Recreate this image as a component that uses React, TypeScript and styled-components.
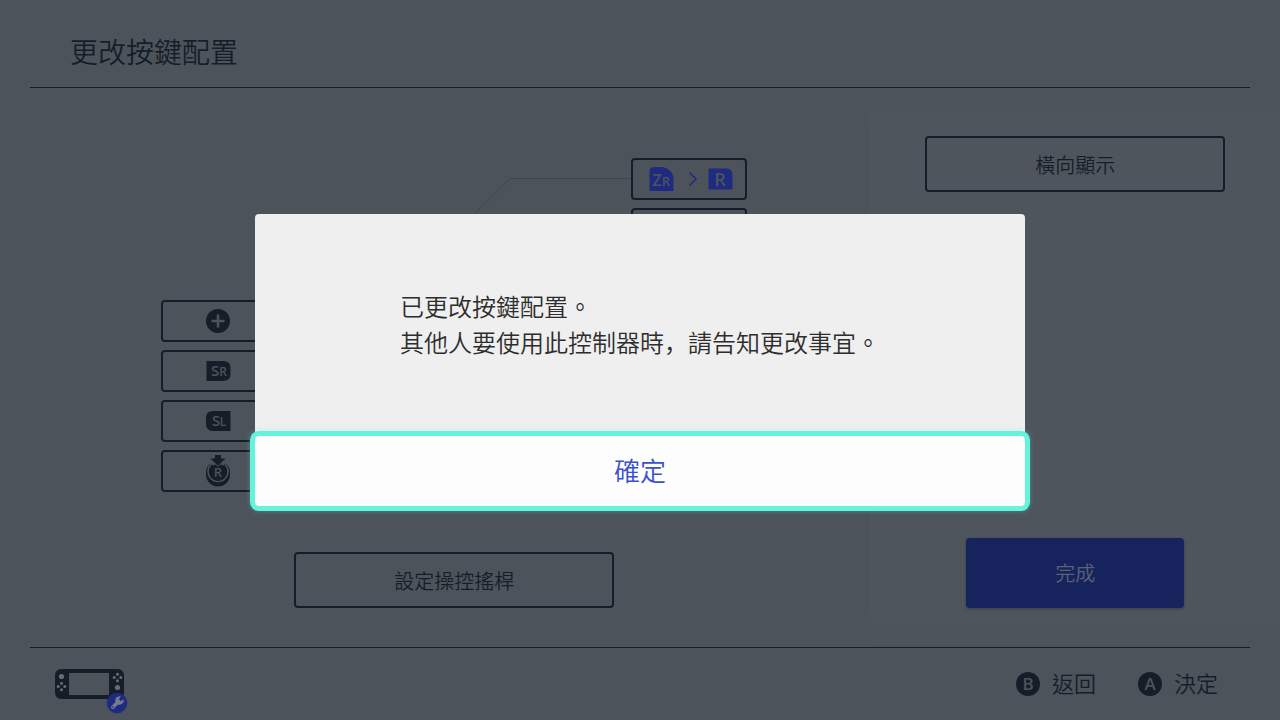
import React from "react";
import styled, { createGlobalStyle } from "styled-components";

const color = {
  page: "#4c535b",
  side: "#4e555d",
  ink: "#151e28",
  blue: "#1f2b80",
  blueDeep: "#17235c",
  faint: "#3f464e",
  paper: "#efefef",
  accent: "#3a50cc",
  focus: "#62f4dc",
};

const Global = createGlobalStyle`
  * { box-sizing: border-box; }
  body {
    margin: 0;
    background: ${color.page};
    color: ${color.ink};
    font-family: "Noto Sans CJK TC", "Noto Sans", sans-serif;
    font-weight: 350;
  }
  button { font: inherit; cursor: pointer; }
`;

const Page = styled.div`
  display: flex;
  flex-direction: column;
  min-height: 100vh;
`;

const Header = styled.header`
  display: flex;
  align-items: center;
  height: 88px;
  margin: 0 30px;
  padding: 14px 40px 0;
  border-bottom: 1px solid ${color.ink};
`;

const Title = styled.h1`
  margin: 0;
  font-size: 28px;
  line-height: 40px;
  font-weight: 350;
`;

const Main = styled.main`
  display: flex;
  flex: 1;
`;

const Workspace = styled.section`
  display: flex;
  flex: 1;
  flex-direction: column;
  align-items: center;
  justify-content: space-between;
  padding: 70px 0 39px 38px;
`;

const Mapping = styled.div`
  display: flex;
  align-items: flex-start;
  justify-content: space-between;
  width: 100%;
  max-width: 586px;
`;

const KeyColumn = styled.div<{ $drop?: boolean }>`
  display: flex;
  flex-direction: column;
  gap: 8px;
  width: 116px;
  padding-top: ${(p) => (p.$drop ? "142px" : "0")};
`;

const Leader = styled.svg`
  margin-left: auto;
  margin-top: 20px;
`;

const KeyButton = styled.button<{ $pair?: boolean }>`
  display: flex;
  align-items: center;
  justify-content: center;
  gap: 9px;
  height: 42px;
  padding: ${(p) => (p.$pair ? "0 0 0 4px" : "0 2px 0 0")};
  border: 2px solid ${color.ink};
  border-radius: 4px;
  background: transparent;
`;

const OutlineButton = styled.button<{ $width: number }>`
  width: ${(p) => p.$width}px;
  height: 56px;
  padding: 2px 0 0;
  border: 2px solid ${color.ink};
  border-radius: 4px;
  background: transparent;
  color: ${color.ink};
  font-size: 20px;
  line-height: 30px;
`;

const Sidebar = styled.aside`
  display: flex;
  flex-direction: column;
  align-items: center;
  justify-content: space-between;
  width: 32%;
  min-width: 340px;
  padding: 48px 0 39px;
  background: linear-gradient(
    ${color.page},
    ${color.side} 40px,
    ${color.side} calc(100% - 40px),
    ${color.page}
  );
`;

const DoneButton = styled.button`
  width: 218px;
  height: 70px;
  padding: 0;
  border: 0;
  border-radius: 4px;
  background: ${color.blueDeep};
  box-shadow: 0 1px 3px rgba(20, 28, 38, 0.4);
  color: #5b6276;
  font-size: 20px;
  line-height: 30px;
`;

const Footer = styled.footer`
  display: flex;
  align-items: flex-start;
  justify-content: space-between;
  height: 73px;
  margin: 0 30px;
  padding: 20px 32px 0 25px;
  border-top: 1px solid ${color.ink};
`;

const Hints = styled.div`
  display: flex;
  gap: 42px;
`;

const HintButton = styled.button`
  display: flex;
  align-items: center;
  gap: 12px;
  padding: 0;
  border: 0;
  background: transparent;
  color: ${color.ink};
  font-size: 22px;
  line-height: 28px;
`;

const HintText = styled.span`
  padding-bottom: 4px;
`;

const Glyph = styled.text`
  font-family: "Open Sans", "Noto Sans", sans-serif;
  font-weight: 600;
  text-anchor: middle;
`;

const Overlay = styled.div`
  position: fixed;
  inset: 0;
  display: flex;
  align-items: center;
  justify-content: center;
`;

const Dialog = styled.div`
  width: 100%;
  max-width: 770px;
  border-radius: 4px;
  background: ${color.paper};
`;

const DialogBody = styled.div`
  display: flex;
  align-items: center;
  justify-content: center;
  height: 222px;
  padding-bottom: 2px;
`;

const Message = styled.p`
  margin: 0;
  color: #2d2d2d;
  font-size: 24px;
  line-height: 36px;
`;

const LowComma = styled.span`
  font-family: "Noto Sans CJK SC", sans-serif;
`;

const ConfirmButton = styled.button`
  display: block;
  width: 100%;
  height: 70px;
  padding: 0 0 2px;
  border: 0;
  border-radius: 4px;
  outline: 0;
  background: #fdfdfd;
  box-shadow: 0 0 0 5px ${color.focus}, 0 0 5px 5px rgba(98, 244, 220, 0.35);
  color: ${color.accent};
  font-size: 26px;
  line-height: 40px;
`;

function ZrIcon() {
  return (
    <svg width="25" height="30" viewBox="0 -3 25 30" aria-hidden="true">
      <path d="M5 0H12C19 0 24.500 5 24.500 12V24H.5V4.500Q.5 0 5 0Z" fill={color.blue} />
      <Glyph x="8" y="19" fontSize="16" fill={color.page}>Z</Glyph>
      <Glyph x="17" y="19" fontSize="13" fill={color.page}>R</Glyph>
    </svg>
  );
}

function RIcon() {
  return (
    <svg width="25" height="30" viewBox="0 -4 25 30" aria-hidden="true">
      <path d="M.5 .5H18Q24.500 .5 24.500 7V21.500H.5Z" fill={color.blue} />
      <Glyph x="12" y="18" fontSize="18" fill={color.page}>R</Glyph>
    </svg>
  );
}

function ArrowIcon() {
  return (
    <svg width="16" height="16" viewBox="0 0 16 16" aria-hidden="true">
      <path d="M6.500 1.500 13 8 6.500 14.500" fill="none" stroke={color.blue} strokeWidth="1.500" />
    </svg>
  );
}

function PlusIcon() {
  return (
    <svg width="24" height="24" viewBox="0 0 24 24" aria-hidden="true">
      <circle cx="12" cy="12" r="12" fill={color.ink} />
      <path d="M12 5.500V18.500M5.500 12H18.500" stroke={color.page} strokeWidth="2.600" />
    </svg>
  );
}

function SrIcon() {
  return (
    <svg width="25" height="26" viewBox="0 -3 25 26" aria-hidden="true">
      <path d="M.5 0H17Q24.500 0 24.500 7V13Q24.500 20 17 20H.5Z" fill={color.ink} />
      <Glyph x="9" y="15" fontSize="15" fill={color.page}>S</Glyph>
      <Glyph x="17" y="15" fontSize="12" fill={color.page}>R</Glyph>
    </svg>
  );
}

function SlIcon() {
  return (
    <svg width="25" height="26" viewBox="0 -3 25 26" aria-hidden="true">
      <path d="M24.500 0H7Q0 0 0 7V13Q0 20 7 20H24.500Z" fill={color.ink} />
      <Glyph x="10" y="15" fontSize="15" fill={color.page}>S</Glyph>
      <Glyph x="17" y="15" fontSize="12" fill={color.page}>L</Glyph>
    </svg>
  );
}

function StickIcon() {
  return (
    <svg width="24" height="32" viewBox="0 0 24 32" aria-hidden="true">
      <path d="M4.200 8.500A12 12 0 0 0 0 17.500V19.500A12 12 0 0 0 24 19.500V17.500A12 12 0 0 0 19.800 8.500L12 14Z" fill={color.ink} />
      <path d="M5 9.300A10 10 0 1 0 19 9.300" fill="none" stroke={color.page} strokeWidth="1.500" />
      <circle cx="12" cy="17.500" r="8.500" fill={color.ink} />
      <path d="M8.500 -1H15.500V3H20.500L12 11.500 3.500 3H8.500Z" fill={color.ink} stroke={color.page} strokeWidth="1" />
      <Glyph x="12" y="22" fontSize="13" fill={color.page}>R</Glyph>
    </svg>
  );
}

function LetterIcon({ letter }: { letter: string }) {
  return (
    <svg width="24" height="24" viewBox="0 0 24 24" aria-hidden="true">
      <circle cx="12" cy="12" r="12" fill={color.ink} />
      <Glyph x="12" y="18" fontSize="17" fill={color.page}>{letter}</Glyph>
    </svg>
  );
}

function ConsoleIcon() {
  return (
    <svg width="74" height="46" viewBox="0 0 74 46" role="img" aria-label="Switch">
      <rect x="0" y="1" width="69" height="30" rx="6" fill={color.ink} />
      <rect x="14" y="5" width="40" height="22" fill={color.page} />
      <g fill="#666d75">
        <circle cx="6.500" cy="8.500" r="2.600" />
        <circle cx="6.500" cy="15.200" r="1.500" />
        <circle cx="6.500" cy="21.800" r="1.500" />
        <circle cx="3.200" cy="18.500" r="1.500" />
        <circle cx="9.800" cy="18.500" r="1.500" />
        <circle cx="62.500" cy="6.200" r="1.500" />
        <circle cx="62.500" cy="12.800" r="1.500" />
        <circle cx="59.200" cy="9.500" r="1.500" />
        <circle cx="65.800" cy="9.500" r="1.500" />
        <circle cx="62.500" cy="19.500" r="2.600" />
      </g>
      <circle cx="62" cy="35" r="10.300" fill={color.blue} />
      <path d="M57.800 39.200 63.500 33.500" stroke="#747b90" strokeWidth="3.600" strokeLinecap="round" />
      <path d="M65.800 28.400A4.300 4.300 0 1 0 68.600 31.200L65.900 33.200 63.800 31.200Z" fill="#747b90" />
      <circle cx="57.900" cy="39.100" r=".8" fill={color.blue} />
    </svg>
  );
}

export default function App() {
  return (
    <>
      <Global />
      <Page lang="zh-Hant">
        <Header>
          <Title>更改按鍵配置</Title>
        </Header>
        <Main>
          <Workspace>
            <Mapping>
              <KeyColumn $drop>
                <KeyButton aria-label="+"><PlusIcon /></KeyButton>
                <KeyButton aria-label="SR"><SrIcon /></KeyButton>
                <KeyButton aria-label="SL"><SlIcon /></KeyButton>
                <KeyButton aria-label="R"><StickIcon /></KeyButton>
              </KeyColumn>
              <Leader width="157" height="38" viewBox="0 0 157 38" aria-hidden="true">
                <path d="M157 .5H36L0 36.500" fill="none" stroke={color.faint} strokeWidth="1" />
              </Leader>
              <KeyColumn>
                <KeyButton $pair aria-label="ZR > R"><ZrIcon /><ArrowIcon /><RIcon /></KeyButton>
                <KeyButton $pair aria-label="R" />
              </KeyColumn>
            </Mapping>
            <OutlineButton $width={320}>設定操控搖桿</OutlineButton>
          </Workspace>
          <Sidebar>
            <OutlineButton $width={300}>橫向顯示</OutlineButton>
            <DoneButton>完成</DoneButton>
          </Sidebar>
        </Main>
        <Footer>
          <ConsoleIcon />
          <Hints>
            <HintButton><LetterIcon letter="B" /><HintText>返回</HintText></HintButton>
            <HintButton><LetterIcon letter="A" /><HintText>決定</HintText></HintButton>
          </Hints>
        </Footer>
        <Overlay>
          <Dialog role="dialog" aria-modal="true" aria-describedby="message">
            <DialogBody>
              <Message id="message">
                已更改按鍵配置。
                <br />
                其他人要使用此控制器時<LowComma lang="zh-Hans">，</LowComma>請告知更改事宜。
              </Message>
            </DialogBody>
            <ConfirmButton>確定</ConfirmButton>
          </Dialog>
        </Overlay>
      </Page>
    </>
  );
}
